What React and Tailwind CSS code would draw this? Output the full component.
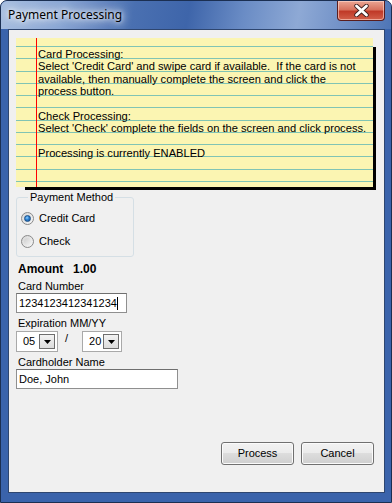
import React from "react";

const F = "font-['Liberation_Sans',Arial,sans-serif]";

function Radio({ checked }) {
  return (
    <div className="w-[13px] h-[13px] rounded-full border border-[#8a8a8a] bg-[linear-gradient(135deg,#d6d6d6,#f7f7f7)] flex items-center justify-center">
      {checked ? (
        <div className="w-[7px] h-[7px] rounded-full border border-[#1b4f86] bg-[radial-gradient(circle_at_40%_35%,#8fd0ff_0%,#2a7fd0_45%,#134f91_100%)]" />
      ) : (
        <div className="w-[7px] h-[7px] rounded-full bg-[linear-gradient(135deg,#cfcfcf,#f2f2f2)]" />
      )}
    </div>
  );
}

function Combo({ value, width }) {
  return (
    <div
      className={`h-[21px] ${width} border border-[#a9a9a9] bg-white flex items-center justify-between pl-[6px] pr-[2px]`}
    >
      <span className="text-[11px] leading-[13px] text-black">{value}</span>
      <div className="w-[16px] h-[15px] border border-[#6e6e6e] bg-[linear-gradient(to_bottom,#f3f3f3,#dcdcdc)] flex items-center justify-center">
        <svg width="7" height="4" viewBox="0 0 7 4">
          <path d="M0 0 H7 L3.5 4 Z" fill="#000" />
        </svg>
      </div>
    </div>
  );
}

function Btn({ children }) {
  return (
    <div className="w-[73px] h-[23px] rounded-[3px] border border-[#707070] bg-[linear-gradient(to_bottom,#f2f2f2_0%,#ebebeb_50%,#dddddd_50%,#cfcfcf_100%)] shadow-[inset_0_0_0_1px_#fbfbfb] flex items-center justify-center text-[11px] text-black">
      {children}
    </div>
  );
}

const noteText = `Card Processing:
Select 'Credit Card' and swipe card if available.  If the card is not
available, then manually complete the screen and click the
process button.

Check Processing:
Select 'Check' complete the fields on the screen and click process.

Processing is currently ENABLED`;

export default function App() {
  return (
    <div
      className={`${F} w-[392px] h-[503px] flex flex-col rounded-t-[7px] border border-[#1b2f52] bg-[#3a63ab] overflow-hidden`}
    >
      {/* title bar */}
      <div className="h-[28px] flex items-start shrink-0 bg-[linear-gradient(100deg,#a8bfe0_0%,#8aa6d4_16%,#4a70b1_34%,#3e65aa_48%,#6a8cc5_62%,#8ea9d5_76%,#6b8cc4_90%,#4e75b6_100%)]">
        <div className="ml-[7px] mt-[6px] text-[12px] leading-[16px] text-black font-['Noto_Sans',sans-serif] [text-shadow:0_0_8px_#fff,0_0_12px_#fff,0_0_4px_rgba(255,255,255,0.8)]">
          Payment Processing
        </div>
        <div className="ml-auto mr-[6px] w-[48px] h-[20px] rounded-b-[4px] border border-t-0 border-[#5a1d1d] bg-[linear-gradient(to_bottom,#eba694_0%,#d8735f_45%,#c03a28_55%,#d2604a_100%)] shadow-[inset_0_0_0_1px_rgba(255,220,210,0.6)] flex items-center justify-center">
          <svg width="15" height="13" viewBox="0 0 15 13">
            <path d="M2.5 2 L12.5 11 M12.5 2 L2.5 11" stroke="#3a1f1f" strokeWidth="4.4" strokeLinecap="round" />
            <path d="M2.5 2 L12.5 11 M12.5 2 L2.5 11" stroke="#ffffff" strokeWidth="2.8" strokeLinecap="round" />
          </svg>
        </div>
      </div>

      {/* client */}
      <div className="flex-1 ml-[7px] mr-[6px] mb-[9px] border border-[#2e4670] bg-[#f0f0f0] flex flex-col text-[11px] text-black">
        {/* note */}
        <div className="ml-[7px] mt-[8px] w-[357px] h-[149px] shrink-0 flex pl-[20px] bg-[#fbf5b2] bg-[repeating-linear-gradient(180deg,rgba(0,0,0,0)_0px,rgba(0,0,0,0)_8px,#80c4b4_8px,#80c4b4_9.2px,rgba(0,0,0,0)_9.2px,rgba(0,0,0,0)_12.25px)] shadow-[6px_6px_0_-3px_#000]">
          <div className="flex-1 border-l border-[#ff0000] pl-[1px] pt-[10px] whitespace-pre leading-[12.4px] text-[11.15px]">
            {noteText}
          </div>
        </div>

        {/* payment method */}
        <fieldset className="ml-[7px] mt-[4px] w-[118px] border border-[#d5dfe5] rounded-[3px] pl-[4px] pt-[3px] pb-[3px]">
          <legend className="ml-[7px] px-[2px] leading-[13px]">Payment Method</legend>
          <div className="h-[23px] flex items-center gap-[5px]">
            <Radio checked />
            <span>Credit Card</span>
          </div>
          <div className="h-[23px] flex items-center gap-[5px]">
            <Radio />
            <span>Check</span>
          </div>
        </fieldset>

        {/* amount */}
        <div className="ml-[9px] mt-[6px] h-[13px] leading-[13px] flex font-bold text-[12px]">
          <span className="w-[55px]">Amount</span>
          <span>1.00</span>
        </div>

        <div className="ml-[9px] mt-[4px] h-[13px] leading-[13px]">Card Number</div>
        <div className="ml-[7px] w-[111px] h-[20px] border border-[#8f8f8f] border-t-[#6f6f6f] bg-white flex items-center pl-[2px]">
          <span className="leading-[13px]">1234123412341234</span>
          <span className="w-px h-[13px] bg-black" />
        </div>

        <div className="ml-[9px] mt-[4px] h-[13px] leading-[13px]">Expiration MM/YY</div>
        <div className="ml-[7px] mt-[1px] flex items-start">
          <Combo value="05" width="w-[42px]" />
          <span className="ml-[7px] mr-[14px] mt-[1px] leading-[13px]">/</span>
          <Combo value="20" width="w-[40px]" />
        </div>

        <div className="ml-[9px] mt-[4px] h-[13px] leading-[13px]">Cardholder Name</div>
        <div className="ml-[7px] w-[162px] h-[20px] border border-[#8f8f8f] border-t-[#6f6f6f] bg-white flex items-center pl-[2px]">
          <span className="leading-[13px]">Doe, John</span>
        </div>

        {/* buttons */}
        <div className="mt-auto mb-[27px] mr-[10px] flex justify-end gap-[7px]">
          <Btn>Process</Btn>
          <Btn>Cancel</Btn>
        </div>
      </div>
    </div>
  );
}
